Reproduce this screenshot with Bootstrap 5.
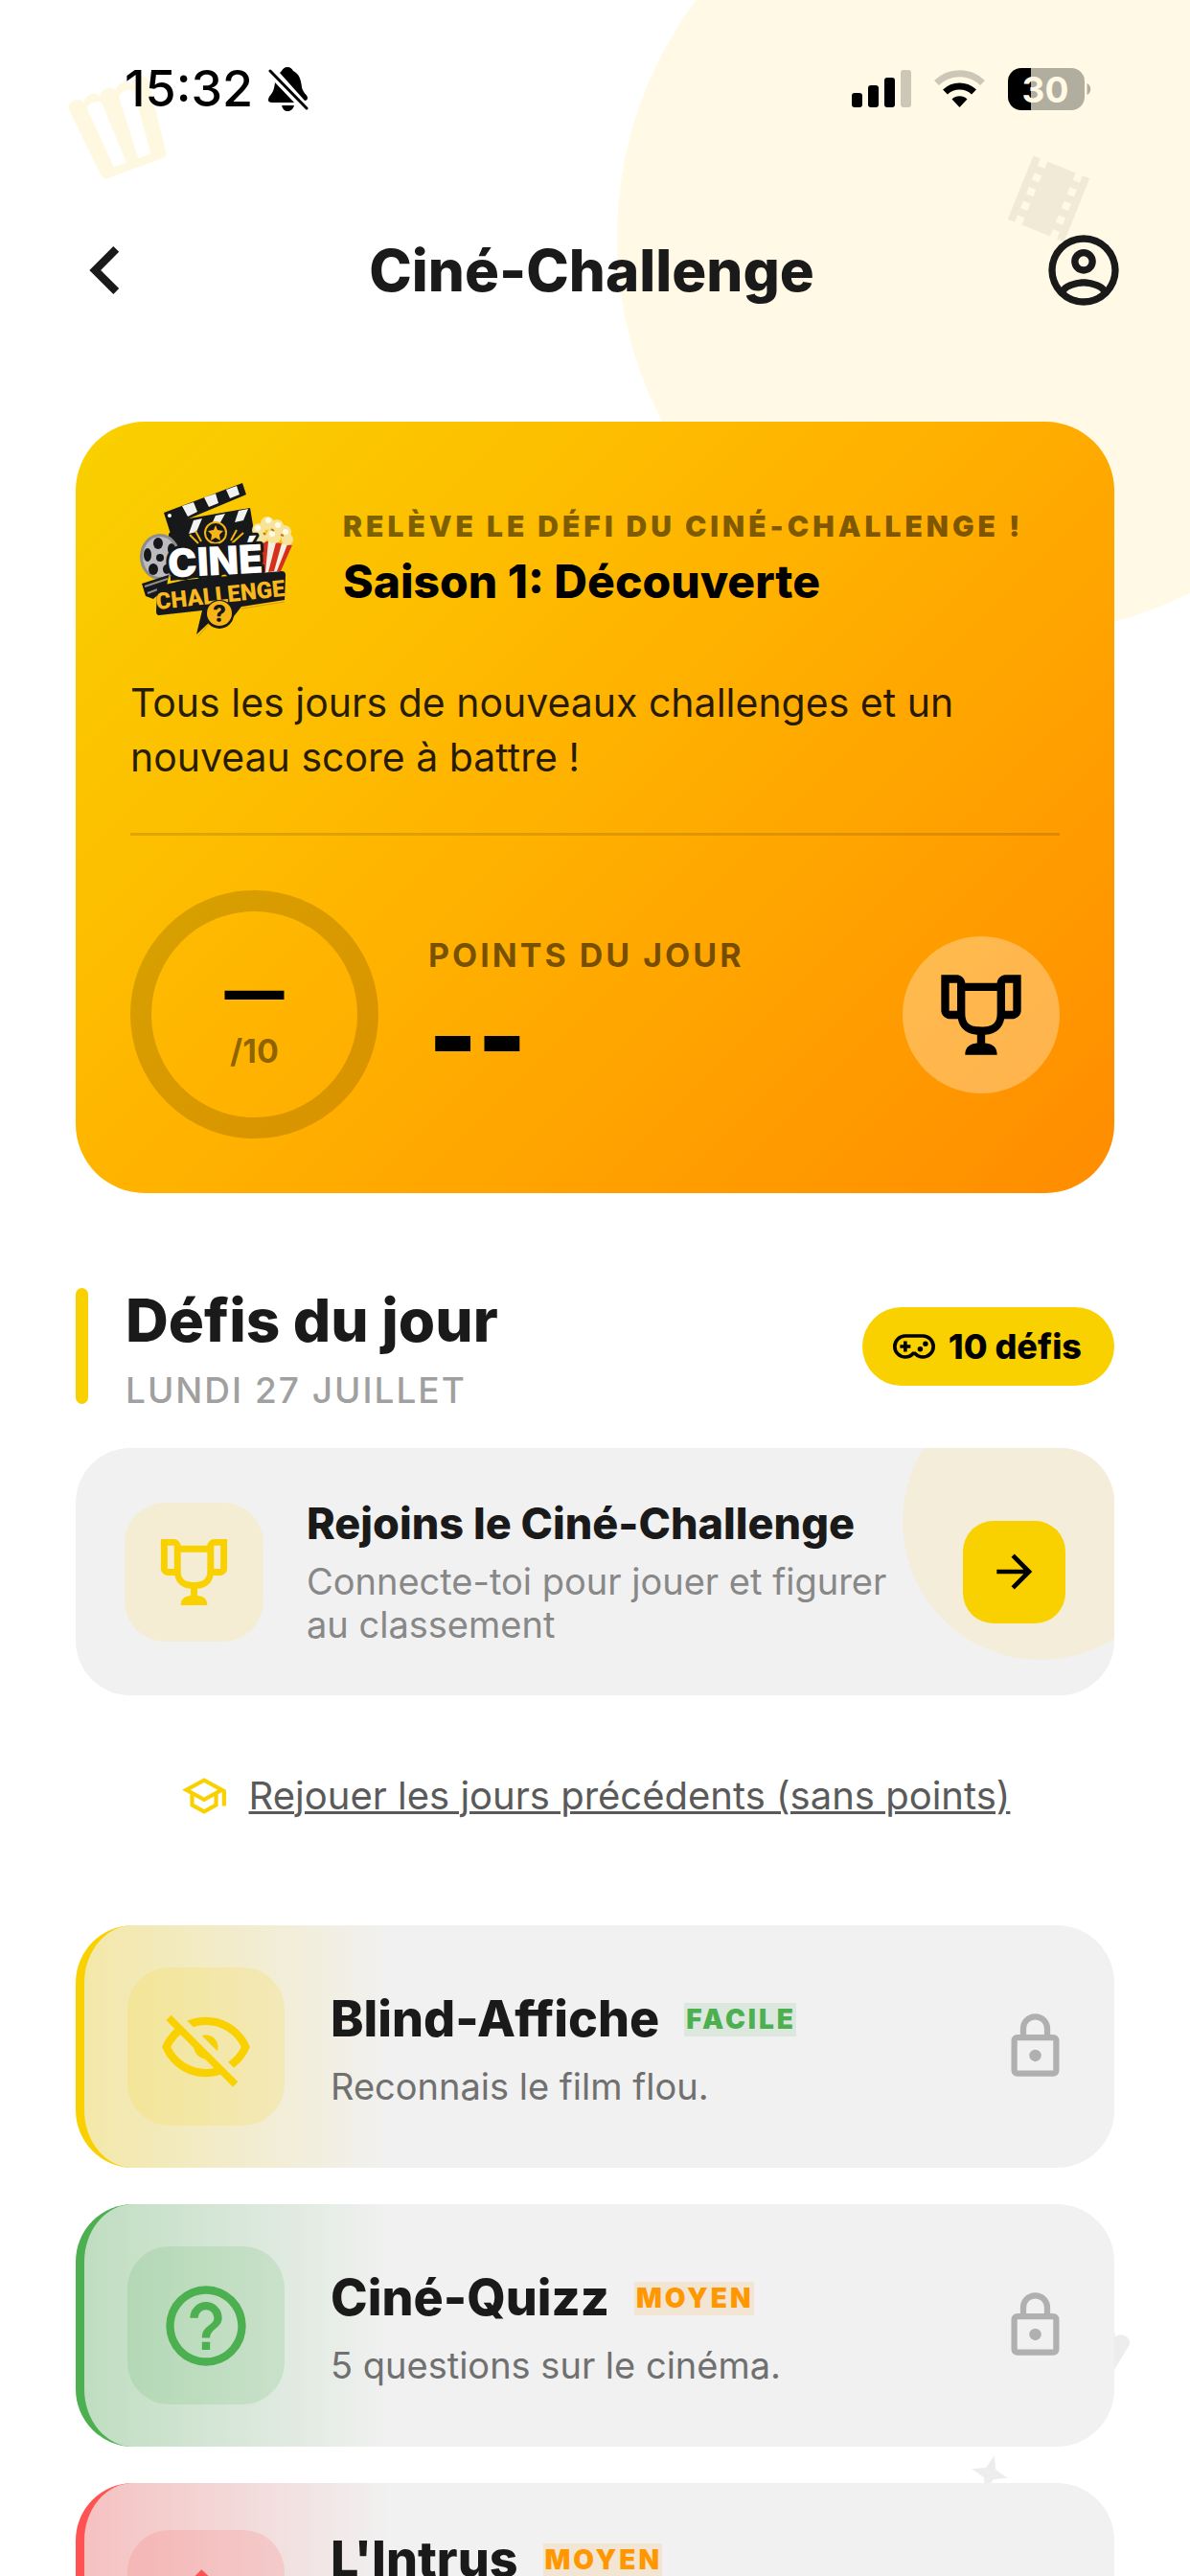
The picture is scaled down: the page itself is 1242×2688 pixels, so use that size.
<!DOCTYPE html>
<html lang="fr">
<head>
  <meta charset="UTF-8">
  <meta name="viewport" content="width=device-width, initial-scale=1.0">
  <title>Ciné-Challenge</title>
  <link href="https://cdn.jsdelivr.net/npm/bootstrap@5.3.0/dist/css/bootstrap.min.css" rel="stylesheet">
  <style>
    body {
      font-family: Inter, "Liberation Sans", sans-serif;
      background-color: #ffffff;
      color: #1a1a1a;
    }
    svg {
      display: block;
      flex-shrink: 0;
      fill: currentColor;
    }
    .titre {
      font-weight: 800;
      margin: 0;
    }
    .ecran {
      isolation: isolate;
    }

    /* Décor de fond */
    .decor {
      position: absolute;
      z-index: -1;
    }
    .decor-cercle {
      top: -166px;
      right: -230px;
      width: 828px;
      height: 828px;
      border-radius: 50%;
      background-color: #fff9e5;
    }
    .decor-popcorn { top: 81px; left: 73px; color: #fff8e0; transform: rotate(-20deg); }
    .decor-film { top: 160px; right: 100px; color: #f0ead6; transform: rotate(22deg); }
    .decor-popcorn-bas { top: 2411px; right: 66px; color: #ededed; transform: rotate(25deg); }
    .decor-etoile { top: 2560px; right: 188px; color: #ededed; transform: rotate(14deg); }

    /* Barre d'état et en-tête */
    .barre-etat {
      padding: 62px 103px 0 130px;
      height: 124px;
      color: #000000;
    }
    .heure { font-size: 52px; line-height: 62px; font-weight: 500; }
    .entete {
      display: grid;
      grid-template-columns: 1fr auto 1fr;
      padding: 0 67px 0 60px;
      margin: 108px 0;
    }
    .btn-icone { border: 0; padding: 0; background: none; color: inherit; }
    .entete .titre { font-size: 60px; line-height: 100px; }
    .contenu { padding: 0 79px; }

    /* Carte de la saison */
    .carte-saison {
      border-radius: 72px;
      padding: 56px 57px 57px;
      color: #000000;
      background: linear-gradient(135deg, #f9d100 0%, #ffb300 45%, #ff8c00 100%);
    }
    .accroche { font-size: 30px; line-height: 40px; font-weight: 900; letter-spacing: 4px; color: rgba(0, 0, 0, .5); }
    .saison { font-size: 48px; line-height: 60px; font-weight: 800; }
    .texte-saison { font-size: 41px; line-height: 57px; margin: 35px 0 50px; color: rgba(0, 0, 0, .85); }
    .separateur { height: 3px; background-color: rgba(0, 0, 0, .12); margin-bottom: 57px; }
    .anneau {
      width: 259px;
      height: 259px;
      border: 22px solid rgba(0, 0, 0, .15);
      border-radius: 50%;
      margin-right: 52px;
    }
    .anneau-score { font-size: 62px; line-height: 76px; font-weight: 900; }
    .anneau-total { font-size: 34px; line-height: 50px; font-weight: 700; color: rgba(0, 0, 0, .45); }
    .points-label { font-size: 34px; line-height: 44px; font-weight: 700; letter-spacing: 3px; color: rgba(0, 0, 0, .55); }
    .points-valeur { font-size: 108px; line-height: 124px; font-weight: 900; }
    .rond-trophee {
      width: 164px;
      height: 164px;
      border-radius: 50%;
      background-color: rgba(255, 255, 255, .3);
    }

    /* Titre de section */
    .section-tete { margin: 98px 0 45px; }
    .trait { width: 13px; height: 121px; border-radius: 7px; background-color: #f9d100; margin-right: 39px; }
    .section-tete .titre { font-size: 62px; line-height: 70px; margin-bottom: 23px; }
    .date { font-size: 37px; line-height: 30px; font-weight: 500; letter-spacing: 2px; color: #a0a0a0; }
    .pastille {
      height: 82px;
      border-radius: 41px;
      padding: 0 34px 0 32px;
      gap: 14px;
      font-size: 36px;
      font-weight: 800;
      background-color: #f9d100;
      color: #000000;
    }

    /* Carte de connexion */
    .carte-rejoindre {
      border-radius: 57px;
      padding: 51px;
      gap: 45px;
      background-color: #f1f1f1;
    }
    .carte-rejoindre::before {
      content: "";
      position: absolute;
      top: -67px;
      right: -67px;
      width: 288px;
      height: 288px;
      border-radius: 50%;
      background-color: #f3edda;
    }
    .case-trophee { width: 145px; height: 145px; border-radius: 42px; background-color: #f4edd4; color: #f9d100; }
    .carte-rejoindre .titre { font-size: 45px; line-height: 56px; margin-bottom: 10px; }
    .sous-titre { font-size: 38px; line-height: 45px; color: #888888; margin: 0; }
    .btn-fleche {
      position: relative;
      width: 107px;
      height: 107px;
      border: 0;
      border-radius: 32px;
      background-color: #f9d100;
      color: #000000;
    }

    .rejouer { gap: 22px; margin: 75px 0 105px; color: #f9d100; }
    .rejouer a { font-size: 40px; line-height: 60px; color: #5a5a5a; text-decoration-thickness: 3px; }

    /* Liste des défis */
    .liste-defis { gap: 38px; }
    .defi {
      --teinte: 249, 209, 0;
      border-radius: 60px;
      border-left: 9px solid rgb(var(--teinte));
      padding: 44px 45px;
      background: linear-gradient(90deg, rgba(var(--teinte), .3) 0, rgba(var(--teinte), 0) 320px) #f1f1f1;
    }
    .defi-vert { --teinte: 76, 175, 80; }
    .defi-rouge { --teinte: 255, 82, 82; }
    .case-defi {
      width: 164px;
      height: 165px;
      border-radius: 44px;
      margin-right: 48px;
      background-color: rgba(var(--teinte), .15);
      color: rgb(var(--teinte));
    }
    .defi .titre { font-size: 52px; line-height: 72px; }
    .defi-tete { gap: 26px; margin-bottom: 12px; }
    .defi .sous-titre { color: #707070; }
    .sous-titre-double { min-height: 90px; }
    .niveau { font-size: 28px; line-height: 35px; font-weight: 900; letter-spacing: 3px; padding-left: 2px; }
    .facile { color: #4caf50; background-color: rgba(76, 175, 80, .12); }
    .moyen { color: #ff9800; background-color: rgba(255, 152, 0, .12); }
    .verrou { color: #b0b0b0; }
  </style>
</head>
<body>
  <svg width="0" height="0" class="position-absolute" aria-hidden="true">
    <symbol id="i-trophee" viewBox="0 0 24 24">
      <path d="M2 2v9c0 1 1 2 2 2h2.2c.4 2 1.7 3.7 4.8 4v2.1c-2.2.2-3 1.3-3 2.9h8c0-1.6-.8-2.7-3-2.9V17c3.1-.3 4.4-2 4.8-4H20c1 0 2-1 2-2V2h-4c-.9 0-2 1-2 2H8c0-1-1.1-2-2-2H2m2 2h2v7H4V4m14 0h2v7h-2V4M8 6h8v5.5c0 2.1-.6 3.5-4 3.5s-4-1.4-4-3.5V6z"/>
    </symbol>
    <symbol id="i-verrou" viewBox="0 0 24 24">
      <path d="M12 17a2 2 0 1 0 0-4 2 2 0 0 0 0 4m6 3V10H6v10h12m0-12a2 2 0 0 1 2 2v10a2 2 0 0 1-2 2H6a2 2 0 0 1-2-2V10a2 2 0 0 1 2-2h1V6a5 5 0 0 1 10 0v2h1m-6-5a3 3 0 0 0-3 3v2h6V6a3 3 0 0 0-3-3z"/>
    </symbol>
    <symbol id="i-popcorn" viewBox="0 0 24 24">
      <path fill-rule="evenodd" d="M4.75 22s-.8 0-.94-1.35L2.03 3.81 2 3.5C2 2.67 2.9 2 4 2s2 .67 2 1.5C6 2.67 6.9 2 8 2s2 .67 2 1.5C10 2.67 10.9 2 12 2s2 .67 2 1.5c0-.83.9-1.5 2-1.5s2 .67 2 1.5c0-.83.9-1.5 2-1.5s2 .67 2 1.5l-.03.31-1.78 16.84C20.05 22 19.25 22 19.25 22zM17.85 4.93C17.55 4.39 16.84 4 16 4c-.81 0-1.64.36-1.86.88L13.5 20h3.16zM6.15 4.93L7.34 20h3.16L9.86 4.88C9.64 4.36 8.81 4 8 4c-.84 0-1.55.39-1.85.93z"/>
    </symbol>
  </svg>

  <div class="ecran position-relative vh-100 overflow-hidden">
    <div class="decor decor-cercle"></div>
    <svg class="decor decor-popcorn" width="106" height="106"><use href="#i-popcorn"/></svg>
    <svg class="decor decor-film" width="95" height="95" viewBox="0 0 24 24"><path d="M18 9h-2V7h2m0 6h-2v-2h2m0 6h-2v-2h2M8 9H6V7h2m0 6H6v-2h2m0 6H6v-2h2M18 3v2h-2V3H8v2H6V3H4v18h2v-2h2v2h8v-2h2v2h2V3h-2z"/></svg>
    <svg class="decor decor-popcorn-bas" width="100" height="100"><use href="#i-popcorn"/></svg>
    <svg class="decor decor-etoile" width="42" height="42" viewBox="0 0 24 24"><path d="M12 1l3 8 8 3-8 3-3 8-3-8-8-3 8-3z"/></svg>

    <!-- Barre d'état -->
    <div class="barre-etat d-flex align-items-center justify-content-between">
      <div class="d-flex align-items-center gap-3">
        <span class="heure">15:32</span>
        <svg width="42" height="46" viewBox="0 0 42 46" aria-label="Silencieux">
          <path d="M20 0c-3 0-5 2-6 4l-2 2 26 29c2 0 3-1 3-3 0-3-5-5-6-11C34 12 32 7 26 4c-1-2-3-4-6-4zM7 16C6 25 4 27 1 31c-2 4-1 6 3 6h23zM14 40h13c-1 4-4 6-7 6s-5-2-6-6z"/>
          <path d="M2 4l38 39" stroke="#ffffff" stroke-width="7"/>
          <path d="M2 4l38 39" stroke="#000000" stroke-width="3" stroke-linecap="round"/>
        </svg>
      </div>
      <div class="d-flex align-items-center">
        <svg class="me-4" width="62" height="40" viewBox="0 0 62 40" aria-label="Réseau">
          <rect x="0" y="24" width="11" height="15" rx="3"/>
          <rect x="17" y="16" width="11" height="23" rx="3"/>
          <rect x="34" y="8" width="11" height="31" rx="3"/>
          <rect x="51" y="0" width="11" height="39" rx="3" fill-opacity=".2"/>
        </svg>
        <svg class="me-4" width="53" height="40" viewBox="0 0 53 40" aria-label="Wi-Fi">
          <path d="M2.5 13.5A34.5 34.5 0 0 1 50.5 13.5" fill="none" stroke="#000000" stroke-opacity=".2" stroke-width="7"/>
          <path d="M11.5 23A21.5 21.5 0 0 1 41.5 23" fill="none" stroke="#000000" stroke-width="7"/>
          <path d="M26.5 39l-8-8.5a11.5 11.5 0 0 1 16 0z"/>
        </svg>
        <svg width="87" height="44" viewBox="0 0 87 44" aria-label="Batterie 30 %">
          <path d="M24 0H14A14 14 0 0 0 0 14v16a14 14 0 0 0 14 14h10z"/>
          <path d="M24 0h42a14 14 0 0 1 14 14v16a14 14 0 0 1-14 14H24z" fill="#b2ae9f"/>
          <path d="M82.5 16c5 2 5 10 0 12z" fill="#b2ae9f"/>
          <text x="39" y="36" text-anchor="middle" font-size="37" font-weight="700" fill="#fff9e5">30</text>
        </svg>
      </div>
    </div>

    <!-- En-tête -->
    <header class="entete align-items-center">
      <button type="button" class="btn-icone me-auto" aria-label="Retour">
        <svg width="100" height="100" viewBox="0 0 24 24"><path d="M15.41 16.58L10.83 12l4.58-4.59L14 6l-6 6 6 6 1.41-1.42z"/></svg>
      </button>
      <h1 class="titre">Ciné-Challenge</h1>
      <button type="button" class="btn-icone ms-auto" aria-label="Mon compte">
        <svg width="88" height="88" viewBox="0 0 24 24"><path d="M12 2A10 10 0 0 0 2 12a10 10 0 0 0 10 10 10 10 0 0 0 10-10A10 10 0 0 0 12 2M7.07 18.28c.43-.9 3.05-1.78 4.93-1.78s4.51.88 4.93 1.78A7.893 7.893 0 0 1 12 20c-1.86 0-3.57-.64-4.93-1.72m11.29-1.45c-1.43-1.74-4.9-2.33-6.36-2.33s-4.93.59-6.36 2.33A7.928 7.928 0 0 1 4 12c0-4.41 3.59-8 8-8s8 3.59 8 8c0 1.82-.62 3.5-1.64 4.83M12 6c-1.94 0-3.5 1.56-3.5 3.5S10.06 13 12 13s3.5-1.56 3.5-3.5S13.94 6 12 6m0 5a1.5 1.5 0 0 1-1.5-1.5A1.5 1.5 0 0 1 12 8a1.5 1.5 0 0 1 1.5 1.5A1.5 1.5 0 0 1 12 11z"/></svg>
      </button>
    </header>

    <main class="contenu">
      <!-- Saison en cours -->
      <section class="carte-saison">
        <div class="d-flex align-items-center gap-5">
          <svg width="174" height="174" viewBox="0 3 174 174" role="img" aria-label="Logo Ciné Challenge">
            <path d="M40 64l16-15 69-12 5 30v36l-88 10z" fill="#17181a"/>
            <path d="M35 42l82-31 4 12-62 26-17 15z" fill="#17181a"/>
            <path d="M54 35l12-4 4 10-10 5zM77 26l12-4 3 10-10 4zM100 18l11-4 3 9-10 4z" fill="#f2f2f2"/>
            <path d="M66 50l9-2-6 14-8 2zM89 45l10-2-6 11-9 2zM113 40l10-2-5 12-9 2z" fill="#f2f2f2"/>
            <circle cx="41" cy="45" r="2" fill="#ffffff"/>
            <!-- bobine -->
            <ellipse cx="31" cy="88" rx="21" ry="24" fill="#8d8d90"/>
            <ellipse cx="31" cy="88" rx="18" ry="21" fill="#bcbcc0"/>
            <g fill="#17181a">
              <ellipse cx="29" cy="74" rx="5" ry="6"/>
              <ellipse cx="43" cy="80" rx="4" ry="6"/>
              <ellipse cx="18" cy="86" rx="4" ry="7"/>
              <ellipse cx="24" cy="101" rx="5" ry="6"/>
              <ellipse cx="38" cy="101" rx="4" ry="5"/>
              <circle cx="31" cy="89" r="4"/>
              <path d="M12 116l28-9-2 12-14 13-8-3z"/>
            </g>
            <path d="M15 119l24-8M18 126l16-6" stroke="#8d8d90" stroke-width="2"/>
            <!-- pop-corn -->
            <path d="M133 70l36 6-13 28-22 2z" fill="#f4ede2"/>
            <path d="M137 71l7 1-3 32-6 1zM152 73l6 1-8 29-6 1zM164 75l5 1-12 27-4 0z" fill="#d6301a"/>
            <g fill="#f8e39b">
              <circle cx="134" cy="60" r="7"/><circle cx="143" cy="53" r="7"/><circle cx="153" cy="56" r="7"/>
              <circle cx="161" cy="62" r="7"/><circle cx="164" cy="70" r="6"/><circle cx="150" cy="66" r="8"/><circle cx="137" cy="68" r="6"/>
            </g>
            <g fill="#fffbe6">
              <circle cx="133" cy="58" r="3"/><circle cx="144" cy="50" r="3"/><circle cx="154" cy="55" r="3"/><circle cx="162" cy="62" r="3"/><circle cx="148" cy="64" r="3"/>
            </g>
            <path d="M147 59l3 2M157 65l3 1M139 63l2 2" stroke="#b4761e" stroke-width="2"/>
            <!-- étoile -->
            <circle cx="89" cy="63" r="11" fill="#17181a" stroke="#f3b50f" stroke-width="2"/>
            <path d="M89 55l2 5 6 1-4 4 1 6-5-3-5 3 1-6-4-4 6-1z" fill="#f9b515"/>
            <path d="M62 65l9 9M68 61l6 11M118 63l-12 11M111 60l-6 11" stroke="#f3b50f" stroke-width="2"/>
            <!-- bandeau -->
            <path d="M28 119l30-7 100-9q4 0 4 4l-1 26-45 7-11 14-21 1-15 14 6-25-45 5q-3 0-3-4z" fill="#17181a"/>
            <path d="M71 171l12-14M116 142l45-7" stroke="#d99a12" stroke-width="1"/>
            <text transform="rotate(-3 90 100)" x="89" y="107" text-anchor="middle" font-size="41" font-weight="900" fill="#ffffff" stroke="#17181a" stroke-width="6" paint-order="stroke" stroke-linejoin="round">CINÉ</text>
            <text transform="rotate(-6 94 128)" x="94" y="136" text-anchor="middle" font-family="Roboto, sans-serif" font-size="24" font-weight="900" fill="#f9b81c">CHALLENGE</text>
            <circle cx="93" cy="148" r="15" fill="#17181a"/>
            <circle cx="93" cy="147" r="13" fill="#f9b515"/>
            <text x="93" y="156" text-anchor="middle" font-size="24" font-weight="800" fill="#17181a">?</text>
          </svg>
          <div>
            <div class="accroche mb-2">RELÈVE LE DÉFI DU CINÉ-CHALLENGE !</div>
            <div class="saison">Saison 1: Découverte</div>
          </div>
        </div>
        <p class="texte-saison">Tous les jours de nouveaux challenges et un nouveau score à battre !</p>
        <div class="separateur"></div>
        <div class="d-flex align-items-center">
          <div class="anneau d-flex flex-column align-items-center justify-content-center">
            <span class="anneau-score">—</span>
            <span class="anneau-total">/10</span>
          </div>
          <div class="flex-grow-1">
            <div class="points-label">POINTS DU JOUR</div>
            <div class="points-valeur">--</div>
          </div>
          <div class="rond-trophee d-flex align-items-center justify-content-center">
            <svg width="100" height="100"><use href="#i-trophee"/></svg>
          </div>
        </div>
      </section>

      <!-- Défis du jour -->
      <div class="section-tete d-flex align-items-center">
        <div class="trait"></div>
        <div class="flex-grow-1">
          <h2 class="titre">Défis du jour</h2>
          <div class="date">LUNDI 27 JUILLET</div>
        </div>
        <span class="pastille d-flex align-items-center">
          <svg width="44" height="44" viewBox="0 0 24 24"><path d="M6 9h2v2h2v2H8v2H6v-2H4v-2h2V9m12.5 0a1.5 1.5 0 1 1 0 3 1.5 1.5 0 1 1 0-3m-3 3a1.5 1.5 0 1 1 0 3 1.5 1.5 0 1 1 0-3M17 5a7 7 0 0 1 0 14c-1.96 0-3.73-.8-5-2.1A6.96 6.96 0 0 1 7 19 7 7 0 0 1 7 5h10M7 7a5 5 0 0 0 0 10c1.64 0 3.09-.79 4-2h2c.91 1.21 2.36 2 4 2a5 5 0 0 0 0-10H7z"/></svg>
          10 défis
        </span>
      </div>

      <section class="carte-rejoindre position-relative overflow-hidden d-flex align-items-center">
        <div class="case-trophee flex-shrink-0 d-flex align-items-center justify-content-center">
          <svg width="83" height="83"><use href="#i-trophee"/></svg>
        </div>
        <div class="flex-grow-1 position-relative">
          <h3 class="titre">Rejoins le Ciné-Challenge</h3>
          <p class="sous-titre">Connecte-toi pour jouer et figurer<br>au classement</p>
        </div>
        <button type="button" class="btn-fleche flex-shrink-0 d-flex align-items-center justify-content-center" aria-label="Se connecter">
          <svg width="56" height="56" viewBox="0 0 24 24"><path d="M4 11v2h12l-5.5 5.5 1.42 1.42L19.84 12l-7.92-7.92L10.5 5.5 16 11H4z"/></svg>
        </button>
      </section>

      <div class="rejouer d-flex align-items-center justify-content-center">
        <svg width="50" height="50" viewBox="0 0 24 24"><path d="M12 3L1 9l4 2.18v6L12 21l7-3.82v-6l2-1.09V17h2V9L12 3m6.82 6L12 12.72 5.18 9 12 5.28 18.82 9M17 16l-5 2.72L7 16v-3.73L12 15l5-2.73V16z"/></svg>
        <a href="#">Rejouer les jours précédents (sans points)</a>
      </div>

      <!-- Liste des défis -->
      <div class="liste-defis d-flex flex-column">
        <article class="defi d-flex align-items-center">
          <div class="case-defi d-flex align-items-center justify-content-center">
            <svg width="100" height="100" viewBox="0 0 24 24"><path d="M2 5.27L3.28 4 20 20.72 18.73 22l-3.08-3.08c-1.15.38-2.37.58-3.65.58-5 0-9.27-3.11-11-7.5.69-1.76 1.79-3.31 3.19-4.54L2 5.27M12 9a3 3 0 0 1 3 3 3 3 0 0 1-.17 1L11 9.17A3 3 0 0 1 12 9m0-4.5c5 0 9.27 3.11 11 7.5a11.79 11.79 0 0 1-4 5.19l-1.42-1.43A9.862 9.862 0 0 0 20.82 12 9.821 9.821 0 0 0 12 6.5c-1.09 0-2.16.18-3.16.5L7.3 5.47c1.44-.62 3.03-.97 4.7-.97M3.18 12A9.821 9.821 0 0 0 12 17.5c.69 0 1.37-.07 2-.21L11.72 15A3.064 3.064 0 0 1 9 12.28L5.6 8.87c-.99.85-1.82 1.91-2.42 3.13z"/></svg>
          </div>
          <div class="flex-grow-1">
            <div class="defi-tete d-flex align-items-center">
              <h3 class="titre">Blind-Affiche</h3>
              <span class="niveau facile">FACILE</span>
            </div>
            <p class="sous-titre">Reconnais le film flou.</p>
          </div>
          <svg class="verrou" width="75" height="75"><use href="#i-verrou"/></svg>
        </article>

        <article class="defi defi-vert d-flex align-items-center">
          <div class="case-defi d-flex align-items-center justify-content-center">
            <svg width="100" height="100" viewBox="0 0 24 24"><path d="M11 18h2v-2h-2v2m1-16A10 10 0 0 0 2 12a10 10 0 0 0 10 10 10 10 0 0 0 10-10A10 10 0 0 0 12 2m0 18c-4.41 0-8-3.59-8-8s3.59-8 8-8 8 3.59 8 8-3.59 8-8 8m0-14a4 4 0 0 0-4 4h2a2 2 0 0 1 2-2 2 2 0 0 1 2 2c0 2-3 1.75-3 5h2c0-2.25 3-2.5 3-5a4 4 0 0 0-4-4z"/></svg>
          </div>
          <div class="flex-grow-1">
            <div class="defi-tete d-flex align-items-center">
              <h3 class="titre">Ciné-Quizz</h3>
              <span class="niveau moyen">MOYEN</span>
            </div>
            <p class="sous-titre">5 questions sur le cinéma.</p>
          </div>
          <svg class="verrou" width="75" height="75"><use href="#i-verrou"/></svg>
        </article>

        <article class="defi defi-rouge d-flex align-items-center">
          <div class="case-defi d-flex align-items-center justify-content-center">
            <svg width="100" height="100" viewBox="0 0 24 24"><path d="M10.9 2.2L20 11l-9.1 9L2 11z"/></svg>
          </div>
          <div class="flex-grow-1">
            <div class="defi-tete d-flex align-items-center">
              <h3 class="titre">L'Intrus</h3>
              <span class="niveau moyen">MOYEN</span>
            </div>
            <p class="sous-titre sous-titre-double"></p>
          </div>
          <svg class="verrou" width="75" height="75"><use href="#i-verrou"/></svg>
        </article>
      </div>
    </main>
  </div>

  <script src="https://cdn.jsdelivr.net/npm/bootstrap@5.3.0/dist/js/bootstrap.bundle.min.js"></script>
</body>
</html>
